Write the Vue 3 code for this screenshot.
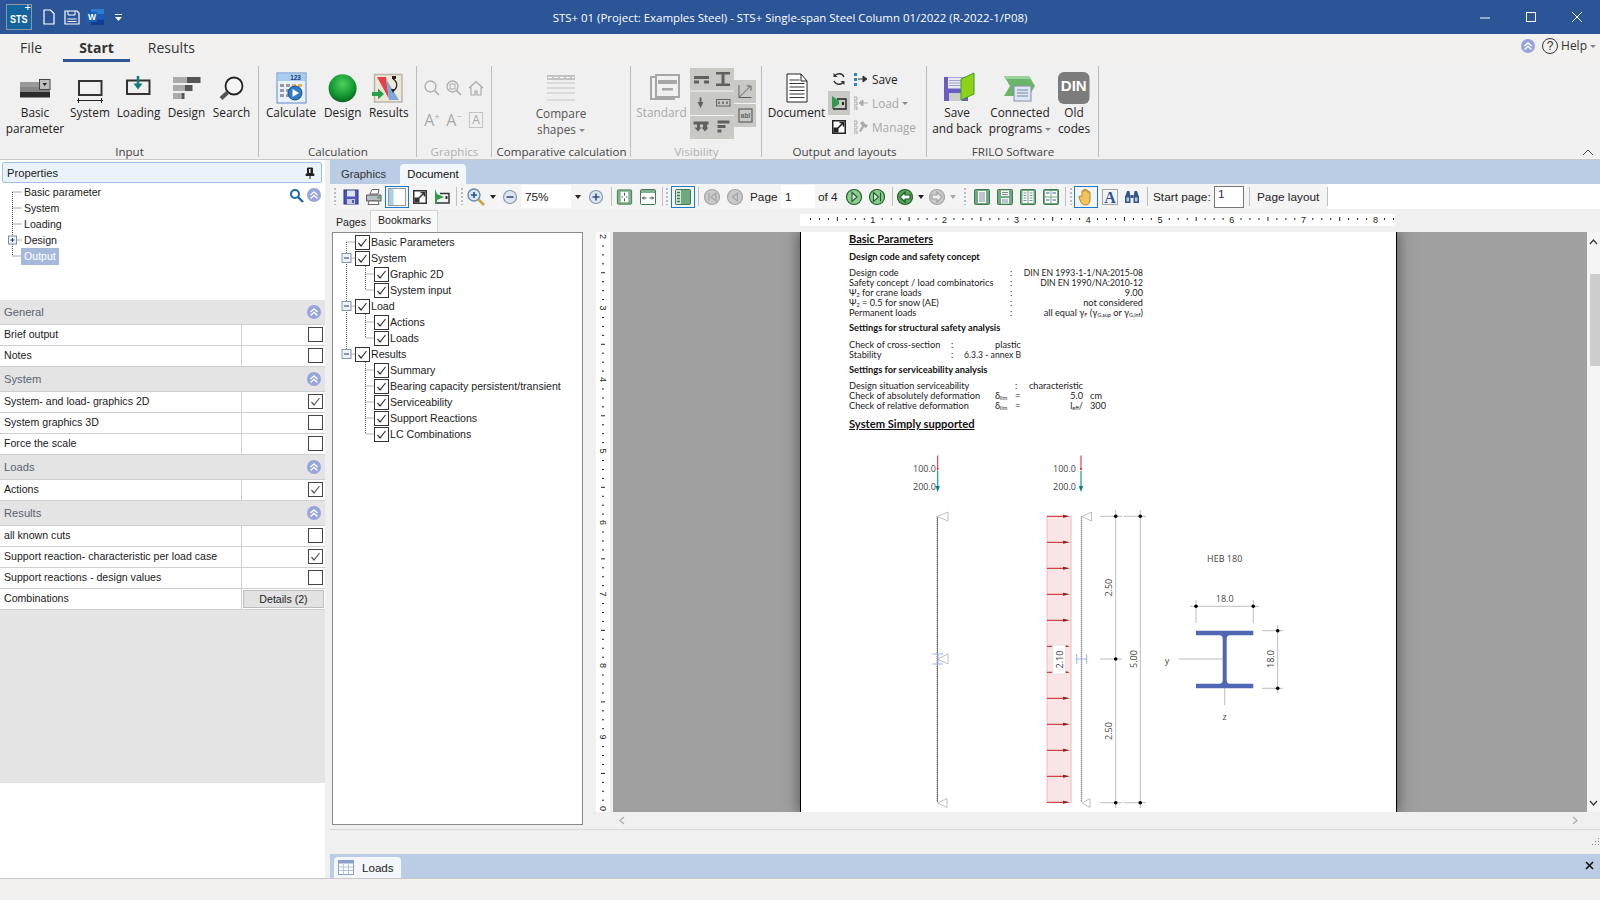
<script setup>
const chev = '<circle cx="8" cy="8" r="7" fill="#98a4dc"/><path d="M4.5 8 8 5l3.5 3M4.5 11.5 8 8.5l3.5 3" fill="none" stroke="#fff" stroke-width="1.4"/>'
const circle = (fill, line, d, inner = 'none') => `<circle cx="10" cy="10" r="7.5" fill="${fill}" stroke="${line}" stroke-width="1.2"/><path d="${d}" fill="${inner}" stroke="${line}" stroke-width="1.2"/>`
const pageIcon = inner => `<rect x="2.5" y="2.5" width="15" height="15" rx="1" fill="#6fa97e" stroke="#3f7a52"/>${inner}`

const tbIcons = {
  save: '<rect x="3" y="3" width="14" height="14" fill="#4b58bd" stroke="#2a2f80"/><rect x="6" y="3.5" width="8" height="6" fill="#dfe3f7"/><rect x="6" y="12" width="8" height="5" fill="#c9c9d9"/><rect x="11" y="13" width="2" height="3" fill="#4b58bd"/>',
  print: '<path d="M6 7 8 2.5h7L14 7z" fill="#fff" stroke="#666"/><path d="M2.5 8h14.5v6H2.5z" fill="#b9bcc4" stroke="#555"/><path d="M5 14h9l1 3.5H4z" fill="#fff" stroke="#666"/><rect x="13" y="9.500" width="3" height="2" fill="#4caf50"/>',
  panel: '<rect x="1.500" y="1.500" width="17" height="17" fill="#fff" stroke="#9a9a9a"/><rect x="2" y="2" width="4.500" height="16" fill="#a8d0e8"/>',
  expo: '<rect x="3" y="3" width="14" height="14" fill="#333"/><rect x="4.500" y="4.500" width="11" height="11" fill="#fff"/><rect x="4.500" y="10.500" width="5" height="5" fill="#333"/><path d="M9 11 14 6M10.500 5.500H14.500V9.500" fill="none" stroke="#333" stroke-width="1.6"/>',
  film: '<path d="M3 2v15h2v-4l7-3-7-3z" fill="#2e9a4a"/><path d="M8 6.500h9V16H5" fill="none" stroke="#333" stroke-width="1.5"/><rect x="13.500" y="9" width="2" height="3" fill="#333"/>',
  zoom: '<circle cx="8" cy="8" r="6" fill="#dbe7f5" stroke="#6a8ab0" stroke-width="1.4"/><path d="M8 5v6M5 8h6" stroke="#1f4f9a" stroke-width="1.6"/><path d="M12.500 12.500 18 18" stroke="#c9a53a" stroke-width="2.6"/>',
  minus: '<circle cx="10" cy="10" r="6.500" fill="#dce6f2" stroke="#8c98a8" stroke-width="1.2"/><path d="M6.500 10h7" stroke="#3a4f78" stroke-width="1.6"/>',
  plus: '<circle cx="10" cy="10" r="6.500" fill="#dce6f2" stroke="#8c98a8" stroke-width="1.2"/><path d="M6.500 10h7M10 6.500v7" stroke="#3a4f78" stroke-width="1.6"/>',
  fit: '<rect x="2.500" y="2.500" width="15" height="15" rx="1" fill="#7fb28c" stroke="#3f7a52"/><rect x="6" y="4.500" width="8" height="11" fill="#fff"/><path d="M10 5.500v3M10 11.500v3M7 10h1.500M11.500 10H13" stroke="#444"/>',
  fitw: '<rect x="2.500" y="2.500" width="15" height="15" rx="1" fill="#fff" stroke="#3f7a52"/><rect x="3" y="3" width="14" height="3" fill="#7fb28c"/><path d="M4.500 11h4M11.500 11h4M6 9.500 4.500 11 6 12.500M14 9.500l1.500 1.500-1.500 1.500" fill="none" stroke="#444"/>',
  side: '<rect x="2.500" y="2.500" width="15" height="15" rx="1" fill="#6fa97e" stroke="#3f7a52"/><rect x="3" y="3" width="5" height="14" fill="#d9e8dc"/><path d="M4 5.500h3M4 8.500h3M4 11.500h3M4 14.500h3" stroke="#3f7a52" stroke-width="1.500"/>',
  first: circle('#cacaca', '#a4a4a4', 'M7 6v8M14 6l-5 4 5 4z'),
  prev: circle('#cacaca', '#a4a4a4', 'M12.500 6l-5 4 5 4z'),
  next: circle('#8ccc8c', '#1f5f2a', 'M8 5.500l5 4.500-5 4.500z', '#e4f4e4'),
  last: circle('#8ccc8c', '#1f5f2a', 'M6.500 5.500l5 4.500-5 4.500zM13.500 5.500v9', '#e4f4e4'),
  back: circle('#58a558', '#1f5f2a', 'M15 8H10V5L5 10l5 5v-3h5z', '#fff'),
  fwd: circle('#cacaca', '#a4a4a4', 'M5 8h5V5l5 5-5 5v-3H5z', '#eee'),
  pg1: pageIcon('<rect x="6" y="4" width="8" height="12" fill="#fff"/><path d="M7 6h6M7 8h6M7 10h6M7 12h6M7 14h6" stroke="#7c8ea0"/>'),
  pg2: pageIcon('<rect x="6" y="3.500" width="8" height="5.500" fill="#fff"/><rect x="6" y="11" width="8" height="5.500" fill="#fff"/><path d="M7 5.500h6M7 7.500h6M7 13h6M7 15h6" stroke="#7c8ea0"/>'),
  pg3: pageIcon('<rect x="4.500" y="4" width="5" height="12" fill="#fff"/><rect x="10.500" y="4" width="5" height="12" fill="#fff"/><path d="M5.500 6h3M5.500 8.500h3M5.500 11h3M5.500 13.500h3M11.500 6h3M11.500 8.500h3M11.500 11h3M11.500 13.500h3" stroke="#7c8ea0"/>'),
  pg4: pageIcon('<rect x="4" y="4" width="5.500" height="5.500" fill="#fff"/><rect x="10.500" y="4" width="5.500" height="5.500" fill="#fff"/><rect x="4" y="10.500" width="5.500" height="5.500" fill="#fff"/><rect x="10.500" y="10.500" width="5.500" height="5.500" fill="#fff"/><path d="M5 6h3.500M11.500 6H15M5 13h3.500M11.500 13H15" stroke="#3f5a88"/>'),
  hand: '<path d="M6 9V4.500a1 1 0 0 1 2 0V3a1 1 0 0 1 2 0v1a1 1 0 0 1 2 0v1.500a1 1 0 0 1 2 0V13c0 3-2 5-4 5-3 0-4-1-5.500-4L3 10.500c-.5-1.300 1-2 2-1z" fill="#f2c55c" stroke="#a87a1c" stroke-width=".9"/>',
  letter: '<rect x="2.500" y="2.500" width="15" height="15" fill="none" stroke="#555" stroke-dasharray="1 1"/><text x="10" y="16" font-family="Liberation Serif" font-weight="700" font-size="16" text-anchor="middle" fill="#2b5597">A</text>',
  binoc: '<path d="M3 16v-6l2-6h2.500l1 6v6zM17 16v-6l-2-6h-2.500l-1 6v6z" fill="#34558a"/><rect x="8.500" y="8" width="3" height="3" fill="#34558a"/><rect x="4.500" y="10.500" width="2.500" height="4" fill="#b8cbe4"/><rect x="13" y="10.500" width="2.500" height="4" fill="#b8cbe4"/>'
}

const toolbar = [
  { k: 'grip', w: 10 }, { i: 'save', w: 22 }, { i: 'print', w: 23 }, { i: 'panel', w: 24, on: true }, { i: 'expo', w: 22 }, { i: 'film', w: 22 },
  { k: 'sep', w: 6 }, { k: 'grip', w: 6 }, { i: 'zoom', w: 22 }, { k: 'caret', w: 12 }, { i: 'minus', w: 22 },
  { k: 'field', w: 50, text: '75%' }, { k: 'caret', w: 14 }, { i: 'plus', w: 22 }, { k: 'sep', w: 8 }, { i: 'fit', w: 19 }, { i: 'fitw', w: 27 },
  { k: 'sep', w: 2 }, { k: 'grip', w: 8 }, { i: 'side', w: 24, on: true }, { k: 'sep', w: 6 }, { i: 'first', w: 22 }, { i: 'prev', w: 24 },
  { k: 'label', w: 34, text: 'Page' }, { k: 'field', w: 34, text: '1' }, { k: 'label', w: 28, text: 'of 4' }, { i: 'next', w: 22 }, { i: 'last', w: 24 },
  { k: 'sep', w: 6 }, { i: 'back', w: 20 }, { k: 'caret', w: 12 }, { i: 'fwd', w: 20 }, { k: 'caret off', w: 12 }, { k: 'grip', w: 12 },
  { i: 'pg1', w: 22 }, { i: 'pg2', w: 23 }, { i: 'pg3', w: 24 }, { i: 'pg4', w: 22 }, { k: 'sep', w: 6 }, { k: 'grip', w: 6 },
  { i: 'hand', w: 24, on: true }, { i: 'letter', w: 23 }, { i: 'binoc', w: 21 }, { k: 'sep', w: 10 },
  { k: 'label tight', w: 62, text: 'Start page:' }, { k: 'input', w: 30, text: '1' }, { k: 'sep', w: 10 }, { k: 'label', w: 71, text: 'Page layout' }, { k: 'sep', w: 4 }
]

const treeItems = ['Basic parameter', 'System', 'Loading', 'Design', 'Output']

const sections = [
  { title: 'General', rows: [{ t: 'Brief output' }, { t: 'Notes' }] },
  { title: 'System', rows: [{ t: 'System- and load- graphics 2D', c: true }, { t: 'System graphics 3D' }, { t: 'Force the scale' }] },
  { title: 'Loads', rows: [{ t: 'Actions', c: true }] },
  { title: 'Results', rows: [{ t: 'all known cuts' }, { t: 'Support reaction- characteristic per load case', c: true }, { t: 'Support reactions - design values' }, { t: 'Combinations', btn: 'Details (2)' }] }
]

const bookmarks = [
  { t: 'Basic Parameters', l: 0 }, { t: 'System', l: 0, e: true }, { t: 'Graphic 2D', l: 1 }, { t: 'System input', l: 1 },
  { t: 'Load', l: 0, e: true }, { t: 'Actions', l: 1 }, { t: 'Loads', l: 1 }, { t: 'Results', l: 0, e: true },
  { t: 'Summary', l: 1 }, { t: 'Bearing capacity persistent/transient', l: 1 }, { t: 'Serviceability', l: 1 },
  { t: 'Support Reactions', l: 1 }, { t: 'LC Combinations', l: 1 }
]
const rowY = i => 8 + 16 * i

const sideTicks = Array.from({ length: 65 }, (_, i) => 5.5 + i * 8.94)
const sideDigits = [2, 3, 4, 5, 6, 7, 8, 9, 0].map((d, i) => ({ d, y: 5.5 + i * 71.5 }))
const topTicks = Array.from({ length: 67 }, (_, i) => 1 + i * 8.97)
const topDigits = [1, 2, 3, 4, 5, 6, 7, 8].map((d, i) => ({ d, x: 1 + (i + 1) * 71.8 }))

const loadArrows = Array.from({ length: 12 }, (_, i) => 516.3 + i * 26)
</script>

<template>
<div class="app">
  <header class="titlebar">
    <div class="quick">
      <div class="logo"><span>STS</span><b>+</b></div>
      <svg class="q-new" width="12" height="16" viewBox="0 0 12 16"><path d="M1 1h6.500L11 4.500V15H1z" fill="none" stroke="#fff" stroke-width="1.2"/></svg>
      <svg class="q-save" width="16" height="15" viewBox="0 0 16 15"><path d="M1 1h12l2 2v11H1z" fill="none" stroke="#fff" stroke-width="1.2"/><path d="M4 1v4h7V1M3.500 9h9M3.500 11.500h9" fill="none" stroke="#fff"/></svg>
      <svg class="q-word" width="17" height="16" viewBox="0 0 17 16"><rect x="4" y="0" width="13" height="16" fill="#2b7cd3"/><rect x="4" y="5" width="13" height="5.500" fill="#185abd"/><rect x="4" y="10.500" width="13" height="5.500" fill="#103f91"/><rect x="0" y="3" width="10" height="10" fill="#1a5fb4"/><text x="5" y="11" font-size="8.500" font-weight="700" text-anchor="middle" fill="#fff" font-family="Liberation Sans">W</text></svg>
      <svg class="q-more" width="7" height="7" viewBox="0 0 7 7"><path d="M0 0h7v1H0zM0 3h7L3.500 7z" fill="#fff"/></svg>
    </div>
    <div class="title">STS+ 01 (Project: Examples Steel) - STS+ Single-span Steel Column 01/2022 (R-2022-1/P08)</div>
    <div class="winctl">
      <svg width="10" height="10" viewBox="0 0 10 10"><path d="M0 6h10" stroke="#fff"/></svg>
      <svg width="10" height="10" viewBox="0 0 10 10"><rect x=".5" y=".5" width="9" height="9" fill="none" stroke="#fff"/></svg>
      <svg width="10" height="10" viewBox="0 0 10 10"><path d="M0 0l10 10M10 0 0 10" stroke="#fff"/></svg>
    </div>
  </header>

  <nav class="menubar">
    <span class="m-file">File</span>
    <span class="m-start">Start</span>
    <span class="m-results">Results</span>
    <div class="help">
      <svg width="16" height="16" viewBox="0 0 16 16" v-html="chev"></svg>
      <svg class="q-mark" width="18" height="18" viewBox="0 0 18 18"><circle cx="9" cy="9" r="7.500" fill="none" stroke="#333"/><text x="9" y="13" font-size="12" text-anchor="middle" fill="#333" font-family="Liberation Sans">?</text></svg>
      <span>Help</span><i class="caret"></i>
    </div>
  </nav>

  <section class="ribbon">
    <div class="group g-input">
      <div class="items">
        <div class="item" style="width:56px">
          <svg class="ric" width="40" height="43" viewBox="0 0 40 43"><rect x="5" y="20" width="30" height="5" fill="#999"/><rect x="5" y="25" width="30" height="5" fill="#858585"/><rect x="5" y="30" width="30" height="5.500" fill="#2b2b2b"/><rect x="24.500" y="17.500" width="10.500" height="10" fill="#bdbdbd" stroke="#444"/><path d="M27.500 21h4.500l-2.250 3z" fill="#222"/></svg>
          <span>Basic</span><span>parameter</span>
        </div>
        <div class="item" style="width:54px">
          <svg class="ric" width="40" height="43" viewBox="0 0 40 43"><rect x="9" y="19" width="22.500" height="14" fill="#f0f0f0" stroke="#333" stroke-width="2"/><path d="M7 38.500h26M8.500 36v5M31.500 36v5" stroke="#222"/></svg>
          <span>System</span>
        </div>
        <div class="item" style="width:43px">
          <svg class="ric" width="40" height="43" viewBox="0 0 40 43"><rect x="8" y="18.500" width="22.500" height="13.500" fill="#f0f0f0" stroke="#333" stroke-width="2"/><path d="M19 14v10" stroke="#0e7e78" stroke-width="2.500"/><path d="M14.500 21.500h9L19 27.500z" fill="#0e7e78"/></svg>
          <span>Loading</span>
        </div>
        <div class="item" style="width:53px">
          <svg class="ric" width="40" height="43" viewBox="0 0 40 43"><rect x="6" y="15" width="14" height="6" fill="#aaa"/><rect x="20" y="15" width="13.500" height="6" fill="#555"/><rect x="6" y="23" width="12" height="6" fill="#aaa"/><rect x="18" y="23" width="7.500" height="6" fill="#555"/><rect x="6" y="31" width="8.500" height="6" fill="#aaa"/><rect x="14.500" y="31" width="3" height="6" fill="#555"/></svg>
          <span>Design</span>
        </div>
        <div class="item" style="width:37px">
          <svg class="ric" width="40" height="43" viewBox="0 0 40 43"><circle cx="22" cy="24" r="8.500" fill="#f6f6f6" stroke="#222" stroke-width="1.800"/><path d="M15.500 30.500 9 36.500" stroke="#555" stroke-width="4"/></svg>
          <span>Search</span>
        </div>
      </div>
      <div class="g-name">Input</div>
    </div>

    <div class="group g-calc">
      <div class="items">
        <div class="item" style="width:64px">
          <svg class="ric" width="40" height="43" viewBox="0 0 40 43"><rect x="6" y="11" width="29" height="30" fill="#e8f0fa" stroke="#5b8bd0"/><rect x="7" y="12" width="27" height="7" fill="#a9cdf0"/><text x="30" y="18" font-size="6.500" font-family="Liberation Sans" text-anchor="end" fill="#1f3f80" font-weight="700">123</text><g fill="#9a9a9a"><rect x="9" y="22" width="4" height="3"/><rect x="15" y="22" width="4" height="3"/><rect x="21" y="22" width="4" height="3" fill="#e0b060"/><rect x="27" y="22" width="4" height="3" fill="#e0b060"/><rect x="9" y="27" width="4" height="3"/><rect x="15" y="27" width="4" height="3"/><rect x="9" y="32" width="4" height="3"/><rect x="15" y="32" width="4" height="3"/></g><circle cx="24" cy="31" r="7" fill="#2f7cc4" stroke="#17508c"/><path d="M21.500 27 28 31l-6.500 4z" fill="#fff"/></svg>
          <span>Calculate</span>
        </div>
        <div class="item" style="width:39.500px">
          <svg class="ric" width="40" height="43" viewBox="0 0 40 43"><defs><radialGradient id="ballG" cx=".5" cy=".35" r=".7"><stop offset="0" stop-color="#4fd05a"/><stop offset=".6" stop-color="#139a32"/><stop offset="1" stop-color="#0a5a1c"/></radialGradient></defs><circle cx="19.600" cy="26.300" r="14" fill="url(#ballG)"/></svg>
          <span>Design</span>
        </div>
        <div class="item" style="width:52.500px">
          <svg class="ric" width="40" height="43" viewBox="0 0 40 43"><rect x="5.500" y="12.500" width="27.500" height="27.500" fill="#eee8d6" stroke="#b9b5a6" stroke-width="1.500"/><path d="M8 15h9l3 22z" fill="#e8404a"/><path d="M17 17 30 38H20z" fill="#7fa8d8"/><path d="M24 17c5 3 5 9 0 12" fill="none" stroke="#222" stroke-width="1.300"/><path d="M22 27h4l-2 4z" fill="#222"/><rect x="23" y="14" width="4" height="3" fill="#222"/><path d="M3 30h6v-3.500l6 5.500-6 5.500V34H3z" fill="#27a04a"/></svg>
          <span>Results</span>
        </div>
      </div>
      <div class="g-name">Calculation</div>
    </div>

    <div class="group g-graphics">
      <div class="items mini-grid">
        <svg width="18" height="18" viewBox="0 0 18 18"><circle cx="7.500" cy="7.500" r="5.500" fill="none" stroke="#aaa" stroke-width="1.300"/><path d="M11.500 11.500 16 16" stroke="#aaa" stroke-width="1.500"/></svg>
        <svg width="18" height="18" viewBox="0 0 18 18"><circle cx="7.500" cy="7.500" r="5.500" fill="none" stroke="#aaa" stroke-width="1.300"/><rect x="5" y="5" width="5" height="5" fill="none" stroke="#aaa"/><path d="M11.500 11.500 16 16" stroke="#aaa" stroke-width="1.500"/></svg>
        <svg width="18" height="18" viewBox="0 0 18 18"><path d="M2 9 9 2.500 16 9M4 8v8h4v-4h2v4h4V8" fill="none" stroke="#aaa" stroke-width="1.200"/></svg>
        <span class="mini-a">A<sup>+</sup></span>
        <span class="mini-a">A<sup>−</sup></span>
        <span class="mini-a boxed">A</span>
      </div>
      <div class="g-name off">Graphics</div>
    </div>

    <div class="group g-compare">
      <div class="items">
        <div class="item dim" style="width:138px">
          <svg class="ric ric-low" width="40" height="44" viewBox="0 0 40 44"><rect x="6" y="13" width="28" height="5" fill="#c4c4c4"/><path d="M7 15.500h26" stroke="#fff" stroke-dasharray="4 2"/><path d="M6 21h28M6 26h28M6 31h28M6 38h28" stroke="#c4c4c4" stroke-width="1.200"/></svg>
          <span>Compare</span><span>shapes <i class="caret"></i></span>
        </div>
      </div>
      <div class="g-name">Comparative calculation</div>
    </div>

    <div class="group g-vis">
      <div class="items">
        <div class="item off" style="width:59px;padding-left:2px">
          <svg class="ric" width="40" height="43" viewBox="0 0 40 43"><rect x="9" y="15" width="23" height="22" fill="none" stroke="#a6a6a6" stroke-width="2"/><rect x="14" y="13" width="23" height="22" fill="#f0f0f0" stroke="#a6a6a6" stroke-width="2"/><rect x="16" y="18" width="19" height="4" fill="#a6a6a6"/><rect x="20" y="26" width="11" height="2.500" fill="#a6a6a6"/></svg>
          <span>Standard</span>
        </div>
        <svg class="vis-block" width="66" height="71" viewBox="0 0 66 71">
          <path d="M0 0h44v12h22v47H44v12H0z" fill="#c8c8c4"/>
          <path d="M0 23h44M0 47.500h44M44 35.500h22" stroke="#f4f4f4"/>
          <g fill="#606060">
            <rect x="4" y="8" width="15" height="3"/><rect x="4" y="12.500" width="5" height="3"/><rect x="14" y="12.500" width="5" height="3"/>
            <rect x="26" y="4" width="14" height="2.500"/><rect x="26" y="15.500" width="14" height="2.500"/><rect x="31.500" y="6" width="3" height="10"/>
            <path d="M7.500 34h6L10.500 40z"/><rect x="9.500" y="29.500" width="2" height="6"/>
            <rect x="27.500" y="52.500" width="12" height="3"/><rect x="27.500" y="57" width="8" height="3"/><rect x="27.500" y="61.500" width="4" height="3"/>
            <path d="M3.500 53.500h15v3h-1.500v3h1.500l-3.500 4-3.500-4h1.500v-3h-3v3h1.500l-3.500 4-3.500-4H7v-3H3.500z"/>
          </g>
          <g fill="none" stroke="#606060">
            <path d="M49 17v12.500h12.500M49 29.500 60 18.500M56.500 18h4.500v4.500"/>
            <rect x="26.500" y="31.500" width="13.500" height="6.500"/>
            <path d="M29 33.500v2.500M33 33.500v2.500M37 33.500v2.500" stroke-width="1.500"/>
            <rect x="49" y="41" width="13" height="13" stroke-width="1.200"/>
          </g>
          <text x="55.500" y="50" font-size="6.500" font-weight="700" fill="#606060" text-anchor="middle" font-family="Liberation Sans">abl</text>
        </svg>
      </div>
      <div class="g-name off">Visibility</div>
    </div>

    <div class="group g-output">
      <div class="items">
        <div class="item" style="width:63px">
          <svg class="ric" width="40" height="43" viewBox="0 0 40 43"><path d="M10 12h14l6 7v21H10z" fill="#fff" stroke="#222"/><path d="M24 12v7h6" fill="none" stroke="#222"/><path d="M12.500 18h10M12.500 21.500h15M12.500 25h15M12.500 28.500h15M12.500 32h15M12.500 35.500h15" stroke="#333"/></svg>
          <span>Document</span>
        </div>
        <div class="o-icons">
          <div><svg width="16" height="16" viewBox="0 0 16 16"><path d="M13 6a5.500 5.500 0 0 0-9.500-1M3 10a5.500 5.500 0 0 0 9.500 1" fill="none" stroke="#333" stroke-width="1.400"/><path d="M2.500 2v4h4zM13.500 14v-4h-4z" fill="#333"/></svg></div>
          <div class="hl"><svg width="16" height="16" viewBox="0 0 16 16"><path d="M1 1v13l7-5V6z" fill="#2e9a4a"/><path d="M6 4h9v10H2" fill="none" stroke="#222" stroke-width="1.400"/><rect x="11" y="7" width="2" height="3" fill="#222"/></svg></div>
          <div><svg width="16" height="16" viewBox="0 0 16 16"><rect x="1" y="1" width="14" height="14" fill="#222"/><rect x="2.500" y="2.500" width="11" height="11" fill="#fff"/><rect x="2.500" y="8.500" width="5" height="5" fill="#222"/><path d="M7 9l5-5M8.500 3.500h4v4" fill="none" stroke="#222" stroke-width="1.600"/></svg></div>
        </div>
        <div class="o-list">
          <div><svg width="14" height="14" viewBox="0 0 14 14"><path d="M0 1h3v3H0zM0 6h3v3H0zM0 11h3v3H0z" fill="#2a8ac8"/><path d="M4 7h7M9 4l4 3-4 3z" stroke="#333" fill="#333"/></svg><span>Save</span></div>
          <div class="off"><svg width="14" height="14" viewBox="0 0 14 14"><path d="M0 1h3v3H0zM0 6h3v3H0zM0 11h3v3H0z" fill="none" stroke="#aaa"/><path d="M6 7h8M9 4 5 7l4 3z" stroke="#aaa" fill="#aaa"/></svg><span>Load</span><i class="caret"></i></div>
          <div class="off"><svg width="14" height="14" viewBox="0 0 14 14"><path d="M0 1h3v3H0zM0 6h3v3H0zM0 11h3v3H0z" fill="none" stroke="#aaa"/><path d="M6 3l3-2 2 3 3 1-2 3-2-1-3 5-2-1 3-5z" fill="#aaa"/></svg><span>Manage</span></div>
        </div>
      </div>
      <div class="g-name">Output and layouts</div>
    </div>

    <div class="group g-frilo">
      <div class="items">
        <div class="item" style="width:60px">
          <svg class="ric" width="40" height="43" viewBox="0 0 40 43"><path d="M7 15h24v24H7z" fill="#6a5cc0"/><rect x="11" y="15.500" width="15" height="11" fill="#e8e8f4"/><path d="M12 18.500h13M12 21h13M12 23.500h13" stroke="#a5a0d0"/><rect x="12" y="31" width="13" height="8" fill="#ccc"/><path d="M24 17 37 11v21l-13 6z" fill="#8ed11a" stroke="#3f9a2a"/></svg>
          <span>Save</span><span>and back</span>
        </div>
        <div class="item" style="width:66px">
          <svg class="ric" width="40" height="43" viewBox="0 0 40 43"><path d="M4 14h25l6 10-6 10H4l6-10z" fill="#6bb56b"/><path d="M4 14h25l2 3H5z" fill="#9ad39a"/><rect x="14" y="24" width="17" height="15" fill="#dfe6f2" stroke="#8090a8"/><path d="M17 28h11M17 31h11M17 34h11" stroke="#7388aa"/></svg>
          <span>Connected</span><span>programs <i class="caret"></i></span>
        </div>
        <div class="item" style="width:42px">
          <svg class="ric" width="40" height="43" viewBox="0 0 40 43"><rect x="4" y="10" width="31.500" height="32" rx="6" fill="#7c7c7c"/><text x="19.750" y="29" font-size="15" font-weight="700" text-anchor="middle" fill="#fff" font-family="Liberation Sans">DIN</text></svg>
          <span>Old</span><span>codes</span>
        </div>
      </div>
      <div class="g-name">FRILO Software</div>
    </div>

    <svg class="collapse" width="12" height="7" viewBox="0 0 12 7"><path d="M1 6 6 1l5 5" fill="none" stroke="#444"/></svg>
  </section>

  <main class="workspace">
    <aside class="left">
      <div class="prop-head">
        <span>Properties</span>
        <svg width="10" height="12" viewBox="0 0 10 12"><path d="M2.500 1h5v5l1.500 1.500v1H1v-1L2.500 6zM5 8.500V12" fill="#222" stroke="#222"/><rect x="4" y="2" width="1.500" height="4" fill="#eaf2fb"/></svg>
      </div>
      <div class="prop-tree">
        <svg class="tree-lines" width="24" height="80" viewBox="0 0 24 80">
          <path d="M12.500 8v64M12.500 8h9M12.500 24h9M12.500 40h9M12.500 56h9M12.500 72h9" fill="none" stroke="#555" stroke-dasharray="1 1"/>
          <rect x="8.500" y="52" width="8" height="8" fill="#f2f4f8" stroke="#7a8ba8"/>
          <path d="M10.500 56h4M12.500 54v4" stroke="#223a6a"/>
        </svg>
        <div v-for="t in treeItems" :key="t" class="pt-row"><span :class="{ sel: t === 'Output' }">{{ t }}</span></div>
        <div class="tree-tools">
          <svg width="15" height="15" viewBox="0 0 15 15"><circle cx="6" cy="6" r="4" fill="none" stroke="#1f66b0" stroke-width="2"/><path d="M9 9l5 5" stroke="#1f66b0" stroke-width="2.400"/></svg>
          <svg width="16" height="16" viewBox="0 0 16 16" v-html="chev"></svg>
        </div>
      </div>
      <template v-for="s in sections" :key="s.title">
        <div class="sec-head">
          <span>{{ s.title }}</span>
          <svg width="16" height="16" viewBox="0 0 16 16" v-html="chev"></svg>
        </div>
        <div v-for="r in s.rows" :key="r.t" class="prop-row">
          <span class="pr-label">{{ r.t }}</span>
          <div class="pr-val">
            <button v-if="r.btn" class="details">{{ r.btn }}</button>
            <span v-else class="cb">
              <svg v-if="r.c" width="11" height="11" viewBox="0 0 11 11"><path d="M1.500 6 4 9l5.500-7" fill="none" stroke="#555" stroke-width="1.200"/></svg>
            </span>
          </div>
        </div>
      </template>
      <div class="prop-fill"></div>
      <div class="prop-white"></div>
    </aside>

    <div class="right">
      <div class="doc-tabs">
        <span class="dt">Graphics</span>
        <span class="dt active">Document</span>
      </div>
      <div class="toolbar">
        <template v-for="(b, n) in toolbar" :key="n">
          <span v-if="b.i" class="tb" :class="{ on: b.on }" :style="{ width: b.w + 'px' }">
            <svg width="20" height="20" viewBox="0 0 20 20" v-html="tbIcons[b.i]"></svg>
          </span>
          <span v-else class="tb-x" :class="b.k" :style="{ width: b.w + 'px' }">{{ b.text }}</span>
        </template>
      </div>

      <div class="doc-body">
        <div class="side">
          <div class="side-tabs">
            <span class="st">Pages</span>
            <span class="st active">Bookmarks</span>
          </div>
          <div class="bm-box">
            <svg class="tree-lines" width="60" height="220" viewBox="0 0 60 220">
              <g fill="none" stroke="#666" stroke-dasharray="1 1">
                <path d="M13.500 8V120" />
                <path d="M32.500 24V56M32.500 72V104M32.500 120V200" />
                <template v-for="(b, i) in bookmarks" :key="i">
                  <path v-if="b.l === 0" :d="`M13.500 ${rowY(i)}H23`" />
                  <path v-else :d="`M32.500 ${rowY(i)}H42`" />
                </template>
              </g>
              <template v-for="(b, i) in bookmarks" :key="'e' + i">
                <g v-if="b.e">
                  <rect x="9" :y="rowY(i) - 4.500" width="9" height="9" fill="#eef1f6" stroke="#8494ad" />
                  <path :d="`M11 ${rowY(i)}h5`" stroke="#223a6a" />
                </g>
              </template>
            </svg>
            <div v-for="b in bookmarks" :key="b.t + b.l" class="bm-row" :class="'lv' + b.l">
              <span class="cb dark">
                <svg width="11" height="11" viewBox="0 0 11 11"><path d="M1.500 6 4 9l5.500-7" fill="none" stroke="#333" stroke-width="1.200"/></svg>
              </span>
              <span>{{ b.t }}</span>
            </div>
          </div>
        </div>

        <div class="ruler-top">
          <svg width="595" height="12" viewBox="0 0 595 12">
            <template v-for="(x, i) in topTicks" :key="i">
              <rect v-if="i % 8" :x="x" :y="i % 4 ? 4 : 3" width="1" :height="i % 4 ? 2 : 4" fill="#222" />
            </template>
            <text v-for="d in topDigits" :key="d.d" :x="d.x" y="9" class="ruler-num" text-anchor="middle">{{ d.d }}</text>
          </svg>
        </div>

        <div class="ruler-left">
          <svg width="14" height="581" viewBox="0 0 14 581">
            <template v-for="(y, i) in sideTicks" :key="i">
              <rect v-if="i % 8" :x="i % 4 ? 6 : 5" :y="y" :width="i % 4 ? 2 : 4" height="1" fill="#222" />
            </template>
            <text v-for="d in sideDigits" :key="d.y" class="ruler-num" text-anchor="middle" :transform="`translate(4 ${d.y}) rotate(90)`">{{ d.d }}</text>
          </svg>
        </div>

        <div class="viewer">
          <article class="page">
            <h1>Basic Parameters</h1>
            <h2>Design code and safety concept</h2>
            <div class="kv k1">
              <span>Design code</span><span>:</span><span class="r num">DIN EN 1993-1-1/NA:2015-08</span>
              <span>Safety concept / load combinatorics</span><span>:</span><span class="r num">DIN EN 1990/NA:2010-12</span>
              <span>Ψ<sub>2</sub> for crane loads</span><span>:</span><span class="r">9.00</span>
              <span>Ψ<sub>2</sub> = 0.5 for snow (AE)</span><span>:</span><span class="r">not considered</span>
              <span>Permanent loads</span><span>:</span><span class="r">all equal γ<sub>F</sub> (γ<sub>G,sup</sub> or γ<sub>G,inf</sub>)</span>
            </div>
            <h2>Settings for structural safety analysis</h2>
            <div class="kv k2">
              <span>Check of cross-section</span><span>:</span><span class="r">plastic</span>
              <span>Stability</span><span>:</span><span class="r num">6.3.3 - annex B</span>
            </div>
            <h2>Settings for serviceability analysis</h2>
            <div class="kv k3">
              <span class="span2">Design situation serviceability</span><span>:</span><span class="r">characteristic</span><span></span>
              <span>Check of absolutely deformation</span><span>δ<sub>lim</sub></span><span>=</span><span class="r">5.0</span><span class="unit">cm</span>
              <span>Check of relative deformation</span><span>δ<sub>lim</sub></span><span>=</span><span class="r">l<sub>eff</sub>/</span><span class="unit">300</span>
            </div>
            <h1 class="sys">System Simply supported</h1>

            <svg class="drawing" width="595" height="372" viewBox="801 440 595 372">
              <!-- left column -->
              <text x="936" y="471.500" class="dim-t" text-anchor="end">100.0</text>
              <text x="936" y="489.500" class="dim-t" text-anchor="end">200.0</text>
              <path d="M937.700 455.500V470" stroke="#c42a30"/>
              <path d="M936.700 468h2l-1 3z" fill="#c42a30"/>
              <path d="M937.700 471V488" stroke="#159a96" stroke-width="1.200"/>
              <path d="M935.500 486h4.400l-2.200 6z" fill="#0f8080"/>
              <path d="M936.500 516V802" stroke="#c8c8c8" stroke-dasharray="1 1"/>
              <path d="M937.500 516V802" stroke="#777"/>
              <path d="M937.500 516.500 948 512v9zM937.500 659 948 654v10zM937.500 803 947 798.500v9z" fill="#fff" stroke="#c0c0c0"/>
              <path d="M932.500 654h10.500M932.500 664h10.500M938 654v10" stroke="#9ab0ee"/>

              <!-- uniform load -->
              <rect x="1046.700" y="515.700" width="24.600" height="287" fill="#f9e5e5"/>
              <path d="M1047 516V803M1071 516V803" stroke="#eec0c0"/>
              <g v-for="y in loadArrows" :key="y">
                <path :d="`M1047 ${y}H1066`" stroke="#c81c24"/>
                <path :d="`M1063 ${y - 1.500}l7 1.500-7 1.500z`" fill="#8a2020"/>
              </g>
              <rect x="1052.700" y="645" width="12.600" height="29" fill="#fff" stroke="#e4e4e4"/>
              <text class="dim-t" text-anchor="middle" transform="translate(1062.500 659.500) rotate(-90)">2.10</text>

              <text x="1076" y="471.500" class="dim-t" text-anchor="end">100.0</text>
              <text x="1076" y="489.500" class="dim-t" text-anchor="end">200.0</text>
              <path d="M1081 455.500V470" stroke="#c42a30"/>
              <path d="M1080 468h2l-1 3z" fill="#c42a30"/>
              <path d="M1081 471V488" stroke="#159a96" stroke-width="1.200"/>
              <path d="M1078.800 486h4.400l-2.200 6z" fill="#0f8080"/>

              <!-- second column -->
              <path d="M1081.500 516V802" stroke="#d0d0d0" stroke-width="2.200" stroke-dasharray="1 1"/>
              <path d="M1081.500 516V802" stroke="#999" stroke-width=".8"/>
              <path d="M1082 516.500 1091.500 512v9zM1082 803 1090 798.500v9z" fill="#fff" stroke="#c0c0c0"/>
              <path d="M1076.700 654v10M1086.700 654v10M1076.700 659h10" stroke="#9ab0ee"/>

              <!-- dimension lines -->
              <g stroke="#bdbdbd" fill="none">
                <path d="M1115.700 510V808M1140.300 510V808"/>
                <path d="M1100 516.300h22M1124 516.300h22M1100 659h22M1100 802.700h22M1124 802.700h22"/>
              </g>
              <g fill="#000">
                <circle cx="1115.700" cy="516.300" r="1.800"/><circle cx="1140.300" cy="516.300" r="1.800"/>
                <circle cx="1115.700" cy="659" r="1.800"/>
                <circle cx="1115.700" cy="802.700" r="1.800"/><circle cx="1140.300" cy="802.700" r="1.800"/>
              </g>
              <text class="dim-t" text-anchor="middle" transform="translate(1111.500 587.700) rotate(-90)">2.50</text>
              <text class="dim-t" text-anchor="middle" transform="translate(1111.500 731) rotate(-90)">2.50</text>
              <text class="dim-t" text-anchor="middle" transform="translate(1136.500 659) rotate(-90)">5.00</text>

              <!-- HEB section -->
              <text x="1224.700" y="562" class="dim-t" text-anchor="middle">HEB 180</text>
              <g stroke="#bdbdbd" fill="none">
                <path d="M1190 606.300H1259M1196 600V623M1253.300 600V623"/>
                <path d="M1262 630.700H1283M1262 688.300H1283M1277.700 625V693"/>
                <path d="M1179 659H1224.700M1224.700 688V705"/>
              </g>
              <g fill="#000">
                <circle cx="1196" cy="606.300" r="1.800"/><circle cx="1253.300" cy="606.300" r="1.800"/>
                <circle cx="1277.700" cy="630.700" r="1.800"/><circle cx="1277.700" cy="688.300" r="1.800"/>
              </g>
              <path d="M1196 630.700H1253.300V635.300H1230Q1226.700 635.300 1226.700 639V680Q1226.700 683.700 1230 683.700H1253.300V688.300H1196V683.700H1219.500Q1222.700 683.700 1222.700 680V639Q1222.700 635.300 1219.500 635.300H1196Z" fill="#5068b4"/>
              <text x="1224.700" y="602" class="dim-t" text-anchor="middle">18.0</text>
              <text class="dim-t" text-anchor="middle" transform="translate(1274 659) rotate(-90)">18.0</text>
              <text x="1167" y="664" class="dim-t" text-anchor="middle">y</text>
              <text x="1224.700" y="720" class="dim-t" text-anchor="middle">z</text>
            </svg>
          </article>
        </div>

        <div class="vscroll">
          <svg width="9" height="6" viewBox="0 0 9 6"><path d="M1 5l3.500-4L8 5" fill="none" stroke="#333" stroke-width="1.200"/></svg>
          <div class="thumb"></div>
          <svg class="down" width="9" height="6" viewBox="0 0 9 6"><path d="M1 1l3.500 4L8 1" fill="none" stroke="#333" stroke-width="1.200"/></svg>
        </div>

        <div class="hscroll">
          <svg width="6" height="9" viewBox="0 0 6 9"><path d="M5 1 1 4.500 5 8" fill="none" stroke="#aaa" stroke-width="1.200"/></svg>
          <svg width="6" height="9" viewBox="0 0 6 9"><path d="M1 1l4 3.500L1 8" fill="none" stroke="#aaa" stroke-width="1.200"/></svg>
        </div>
      </div>

      <div class="strip">
        <svg width="10" height="10" viewBox="0 0 10 10"><path d="M8 1h1v1H8zM5 4h1v1H5zM8 4h1v1H8zM2 7h1v1H2zM5 7h1v1H5zM8 7h1v1H8z" fill="#888"/></svg>
      </div>
      <div class="loadsbar">
        <div class="loads-tab">
          <svg width="16" height="15" viewBox="0 0 16 15"><rect x=".5" y=".5" width="15" height="14" fill="#fff" stroke="#8aa0c8"/><rect x=".5" y=".5" width="15" height="3" fill="#8aa0c8"/><path d="M1 7h14M1 10.500h14M5.500 3.500v11M10.500 3.500v11" stroke="#b5c4de"/></svg>
          <span>Loads</span>
        </div>
        <svg class="bar-x" width="9" height="9" viewBox="0 0 9 9"><path d="M1 1l7 7M8 1 1 8" stroke="#111" stroke-width="1.600"/></svg>
      </div>
    </div>
  </main>

  <footer class="status"></footer>
</div>
</template>

<style>
html, body {
  margin: 0;
  overflow: hidden;
}
</style>

<style scoped>
.app {
  width: 1600px;
  height: 900px;
  display: flex;
  flex-direction: column;
  background: #f0f0f0;
  color: #222;
  font-family: "Open Sans", "Noto Sans", sans-serif;
  font-size: 11.800px;
  overflow: hidden;
}

/* title bar */
.titlebar {
  height: 34px;
  flex: none;
  background: #2b5597;
  color: #fff;
  display: flex;
  align-items: center;
  position: relative;
}
.quick {
  display: flex;
  align-items: center;
  padding-left: 6px;
}
.logo {
  width: 24px;
  height: 24px;
  background: #14649f;
  border: 1px solid #8a97a8;
  position: relative;
  display: flex;
  align-items: center;
  justify-content: center;
}
.logo span {
  font: 700 10px/10px "Liberation Sans", sans-serif;
  transform: scaleX(.9);
  margin-top: 6px;
}
.logo b {
  position: absolute;
  top: -3px;
  right: 0;
  font: 400 11px/11px "Liberation Sans", sans-serif;
}
.q-new { margin-left: 11px; }
.q-save { margin-left: 9px; }
.q-word { margin-left: 7px; }
.q-more { margin-left: 11px; }
.title {
  position: absolute;
  left: 0;
  width: 1580px;
  text-align: center;
  white-space: nowrap;
  font-size: 11.450px;
}
.winctl {
  margin-left: auto;
  display: flex;
  gap: 36px;
  padding-right: 18px;
}

/* menu tabs */
.menubar {
  height: 28px;
  flex: none;
  background: #f2f1f0;
  display: flex;
  align-items: flex-start;
  font-size: 14px;
  color: #333;
  line-height: 28px;
}
.m-file { margin-left: 20px; }
.m-start {
  margin-left: 21px;
  padding: 0 16px;
  font-weight: 700;
  height: 25px;
  border-bottom: 3px solid #2b5597;
}
.m-results { margin-left: 18px; }
.help {
  margin-left: auto;
  display: flex;
  align-items: center;
  height: 24px;
  font-size: 12px;
  line-height: 1;
  padding-right: 4px;
}
.q-mark { margin-left: 5px; margin-right: 2px; }
.caret {
  display: inline-block;
  width: 0;
  height: 0;
  border: 3px solid transparent;
  border-top: 3px solid #888;
  border-bottom: 0;
  margin-left: 3px;
  vertical-align: middle;
}

/* ribbon */
.ribbon {
  height: 98px;
  flex: none;
  display: flex;
  background: #f0f0f0;
  position: relative;
  border-bottom: 1px solid #c8c8c8;
  box-sizing: border-box;
}
.group {
  display: flex;
  flex-direction: column;
  position: relative;
  flex: none;
  box-sizing: border-box;
}
.group::after {
  content: "";
  position: absolute;
  right: 0;
  top: 4px;
  bottom: 2px;
  width: 1px;
  background: #bdbdbd;
}
.g-input { width: 259px; padding-left: 7px; }
.g-input .g-name { margin-left: -7px; }
.g-calc { width: 158px; }
.g-graphics { width: 75px; }
.g-compare { width: 139px; }
.g-vis { width: 131px; }
.g-output { width: 165px; padding-left: 3px; }
.g-output .g-name { margin-left: -3px; }
.g-frilo { width: 172px; }
.items {
  display: flex;
  height: 82px;
  flex: none;
  box-sizing: border-box;
}
.item {
  display: flex;
  flex-direction: column;
  align-items: center;
  flex: none;
  line-height: 16px;
  white-space: nowrap;
  box-sizing: border-box;
}
.item .caret { margin-left: 0; }
.ric { flex: none; margin-bottom: -1px; }
.item.off, .off { color: #a8a8a8; }
.item.dim { color: #555; }
.g-name {
  text-align: center;
  line-height: 15px;
  white-space: nowrap;
  color: #444;
  font-size: 11.600px;
}
.g-name.off { color: #b0b0b0; }
.mini-grid {
  display: grid;
  grid-template-columns: repeat(3, 22px);
  grid-auto-rows: 32px;
  justify-items: center;
  align-items: center;
  align-content: start;
  padding: 10px 0 0 4px;
}
.mini-a {
  font-size: 16px;
  line-height: 18px;
  color: #aaa;
  white-space: nowrap;
}
.mini-a sup {
  font-size: 9px;
  line-height: 0;
}
.mini-a.boxed {
  border: 1px solid #c4c4c4;
  font-size: 12px;
  line-height: 14px;
  padding: 0 2px;
}
.vis-block { margin: 6px 0 0 0; }
.o-icons {
  margin-top: 5px;
  width: 22px;
  flex: none;
}
.o-icons div {
  height: 24px;
  display: flex;
  align-items: center;
  justify-content: center;
}
.o-icons .hl { background: #c8c8c4; }
.o-list {
  margin: 5px 0 0 4px;
}
.o-list div {
  height: 24px;
  display: flex;
  align-items: center;
  gap: 4px;
}
.o-list .caret { margin-left: -1px; }
.collapse {
  position: absolute;
  right: 6px;
  top: 87px;
}

/* workspace */
.workspace {
  height: 718px;
  flex: none;
  display: flex;
}
.left {
  width: 325px;
  flex: none;
  display: flex;
  flex-direction: column;
  background: #fff;
  font-family: "Liberation Sans", sans-serif;
  font-size: 10.600px;
  color: #1a1a1a;
}
.prop-head {
  height: 19px;
  margin: 2px 3px 0 2px;
  flex: none;
  border: 1px solid #9fc0e8;
  border-radius: 2px;
  background: #eaf2fb;
  display: flex;
  align-items: center;
  justify-content: space-between;
  padding: 0 6px 0 4px;
  font-size: 11.200px;
}
.prop-tree {
  height: 117px;
  flex: none;
  position: relative;
  box-sizing: border-box;
  padding-top: 1px;
}
.tree-lines {
  position: absolute;
  left: 0;
  top: 1px;
}
.pt-row {
  height: 16px;
  line-height: 16px;
  padding-left: 24px;
  position: relative;
}
.pt-row .sel {
  background: #a5b8dc;
  color: #fff;
  display: inline-block;
  padding: 0 3px;
  margin-left: -3px;
  height: 17px;
}
.tree-tools {
  position: absolute;
  right: 3px;
  top: 4px;
  display: flex;
  align-items: center;
  gap: 2px;
}
.sec-head {
  height: 25px;
  flex: none;
  background: #e4e4e4;
  display: flex;
  align-items: center;
  justify-content: space-between;
  padding: 0 3px 1px 4px;
  box-sizing: border-box;
  border-bottom: 1px solid #cfcfcf;
  color: #5a6270;
  font-size: 11.200px;
}
.prop-row {
  height: 21px;
  flex: none;
  display: grid;
  grid-template-columns: 242px 1fr;
  border-bottom: 1px solid #cfcfcf;
  box-sizing: border-box;
}
.pr-label {
  line-height: 18px;
  padding-left: 4px;
  white-space: nowrap;
  border-right: 1px solid #cfcfcf;
}
.pr-val {
  display: flex;
  align-items: center;
  justify-content: flex-end;
  padding: 0 2px 1px 0;
}
.cb {
  width: 13px;
  height: 13px;
  border: 1px solid #444;
  background: #fff;
  flex: none;
  display: inline-flex;
  align-items: center;
  justify-content: center;
}
.details {
  width: 81px;
  height: 18px;
  margin-right: -1px;
  padding: 0;
  border: 1px solid #bdbdbd;
  background: #e2e2e2;
  font: inherit;
  color: #222;
}
.prop-fill {
  height: 173px;
  flex: none;
  background: #e4e4e4;
}
.prop-white {
  flex: 1;
  background: #fff;
}

.right {
  flex: 1;
  min-width: 0;
  display: flex;
  flex-direction: column;
  margin-left: 5px;
  background: #f0f0f0;
}
.doc-tabs {
  height: 24px;
  flex: none;
  background: #bbcde5;
  display: flex;
  align-items: flex-end;
  padding-left: 11px;
  font-family: "Liberation Sans", sans-serif;
  font-size: 11.300px;
}
.dt {
  height: 20px;
  line-height: 20px;
  color: #333;
}
.dt.active {
  margin-left: 14px;
  padding: 0 7px;
  background: #f3f7fb;
  border-radius: 4px 4px 0 0;
  color: #111;
}
.toolbar {
  height: 25px;
  flex: none;
  display: flex;
  align-items: stretch;
  background: linear-gradient(90deg, #f4f4f4 0, #f4f4f4 997px, #fff 998px);
  font-family: "Liberation Sans", sans-serif;
  font-size: 11.800px;
}
.tb {
  flex: none;
  display: flex;
  align-items: center;
  justify-content: center;
  box-sizing: border-box;
  margin: 2px 0 1px;
}
.tb.on {
  border: 1px solid #1a7ad0;
  margin: 2px 0 1px;
}
.tb-x {
  flex: none;
  display: flex;
  align-items: center;
  box-sizing: border-box;
}
.tb-x.sep::after {
  content: "";
  width: 1px;
  height: 19px;
  background: #c0c0c0;
  margin: 0 auto;
}
.tb-x.grip::after {
  content: "";
  width: 2px;
  height: 17px;
  margin: 0 auto;
  background: repeating-linear-gradient(#bbb 0 2px, transparent 2px 4px);
}
.tb-x.caret {
  border: 0;
  height: auto;
  margin: 0;
  vertical-align: initial;
  justify-content: center;
}
.tb-x.caret::after {
  content: "";
  border: 3px solid transparent;
  border-top: 4px solid #222;
  border-bottom: 0;
}
.tb-x.caret.off::after { border-top-color: #aaa; }
.tb-x.label { padding-left: 3px; white-space: nowrap; }
.tb-x.label.tight { padding-left: 1px; }
.tb-x.field {
  background: #fff;
  padding-left: 4px;
  margin: 1px 0;
}
.tb-x.input {
  background: #fff;
  border: 1px solid #777;
  padding: 0 0 6px 3px;
  color: #3a1a6a;
  margin: 2px 0 1px;
}

.doc-body {
  height: 620px;
  flex: none;
  display: grid;
  grid-template-columns: 266px 17px 974px 13px;
  grid-template-rows: 23px 580px 17px;
}
.side {
  grid-row: 1 / 4;
  grid-column: 1;
  display: flex;
  flex-direction: column;
  font-family: "Liberation Sans", sans-serif;
  font-size: 10.600px;
}
.side-tabs {
  height: 23px;
  flex: none;
  display: flex;
  align-items: flex-end;
}
.st {
  height: 18px;
  line-height: 17px;
  padding: 0 6px;
  width: 40px;
  box-sizing: border-box;
}
.st.active {
  width: 68px;
  height: 22px;
  line-height: 18px;
  padding: 0 7px;
  background: #fafafa;
  border: 1px solid #d4d4d4;
  border-bottom: 0;
}
.bm-box {
  margin: 0 0 4px 2px;
  width: 251px;
  height: 593px;
  flex: none;
  box-sizing: border-box;
  border: 1px solid #8a8a8a;
  background: #fff;
  padding-top: 1px;
  position: relative;
}
.bm-box .tree-lines {
  top: 1px;
}
.bm-row {
  height: 16px;
  display: flex;
  align-items: center;
  position: relative;
  white-space: nowrap;
  gap: 1px;
}
.lv0 { padding-left: 22px; }
.lv1 { padding-left: 41px; }
.cb.dark { border-color: #333; }

.ruler-top {
  grid-row: 1;
  grid-column: 3;
  padding: 5px 0 0 187px;
}
.ruler-top svg {
  display: block;
  background: #fff;
}
.ruler-left {
  grid-row: 2;
  grid-column: 2;
  overflow: hidden;
}
.ruler-left svg {
  display: block;
  background: #fff;
  margin-top: -1px;
}
.ruler-num {
  font: 9px "Liberation Sans", sans-serif;
  fill: #222;
}
.viewer {
  grid-row: 2;
  grid-column: 3;
  background: #a0a0a0;
  overflow: hidden;
  padding-left: 188px;
}
.page {
  width: 595px;
  height: 580px;
  background: #fff;
  box-sizing: border-box;
  padding: 0 0 0 48px;
  box-shadow: -1px 0 0 #000, 1px 0 0 #000, 0 0 14px 2px #555;
  font-family: Lato, "Open Sans", sans-serif;
  font-size: 9.200px;
  color: #222;
  overflow: hidden;
}
.page h1 {
  margin: 0;
  font-size: 11px;
  line-height: 14px;
  font-weight: 700;
  width: fit-content;
  text-decoration: underline;
  color: #111;
}
.page h1.sys {
  font-size: 11.200px;
  line-height: 16px;
  margin-top: 5px;
}
.page h2 {
  margin: 4px 0 0;
  font-size: 9.300px;
  line-height: 12px;
  font-weight: 700;
  color: #111;
}
.page h1 + h2 { margin-top: 5px; }
.kv {
  display: grid;
  grid-auto-rows: 10px;
  line-height: 10px;
  margin-top: 5px;
  white-space: nowrap;
}
.kv sub {
  font-size: 5.500px;
  line-height: 0;
  vertical-align: -1px;
}
.k1 { grid-template-columns: 161px 6px 127px; }
.k2 {
  grid-template-columns: 102px 6px 64px;
  margin-top: 6px;
}
.k3 { grid-template-columns: 146px 20px 10px 58px auto; }
.span2 { grid-column: span 2; }
.unit { padding-left: 7px; }
.r { text-align: right; }
.num { font-size: 8.600px; }
.drawing {
  display: block;
  margin: 8px 0 0 -48px;
}
.dim-t {
  font: 9px "Open Sans", sans-serif;
  fill: #444;
}

.vscroll {
  grid-row: 2;
  grid-column: 4;
  background: #f5f5f5;
  display: flex;
  flex-direction: column;
  align-items: center;
  padding-top: 7px;
}
.vscroll svg { flex: none; }
.thumb {
  width: 10px;
  height: 92px;
  margin: 29px 0 0 3px;
  background: #cdcdcd;
  flex: none;
}
.vscroll .down { margin-top: auto; margin-bottom: 6px; }
.hscroll {
  grid-row: 3;
  grid-column: 3 / 5;
  display: flex;
  justify-content: space-between;
  align-items: center;
  padding: 0 22px 0 6px;
  height: 16px;
}
.strip {
  height: 25px;
  flex: none;
  border-top: 1px solid #d8d8d8;
  box-sizing: border-box;
  display: flex;
  justify-content: flex-end;
  align-items: center;
}
.loadsbar {
  height: 24px;
  flex: none;
  background: #bbcde5;
  display: flex;
  align-items: flex-end;
  justify-content: space-between;
  padding-left: 4px;
  font-family: "Liberation Sans", sans-serif;
  font-size: 11.600px;
}
.loads-tab {
  width: 67px;
  height: 21px;
  background: #f3f7fb;
  border-radius: 4px 4px 0 0;
  display: flex;
  align-items: center;
  box-sizing: border-box;
  padding-left: 4px;
  gap: 8px;
}
.bar-x { margin: 0 6px 8px 0; }
.status {
  height: 22px;
  flex: none;
  background: #f2f1f0;
  border-top: 1px solid #c8c8c8;
  box-sizing: border-box;
}
</style>
